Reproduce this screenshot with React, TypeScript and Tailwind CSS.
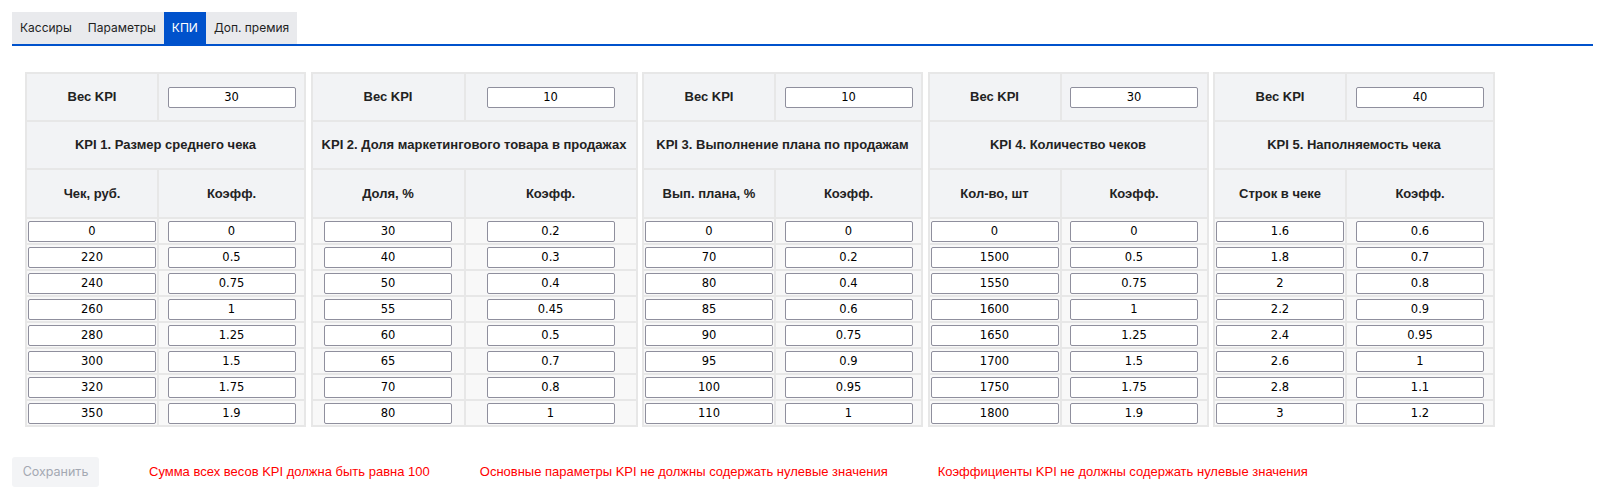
import React from "react";

type Kpi = {
  weight: string;
  title: string;
  colA: string;
  colB: string;
  cols: string;
  rows: [string, string][];
};

const kpis: Kpi[] = [
  {
    weight: "30",
    title: "KPI 1. Размер среднего чека",
    colA: "Чек, руб.",
    colB: "Коэфф.",
    cols: "grid-cols-[130px_145px]",
    rows: [
      ["0", "0"],
      ["220", "0.5"],
      ["240", "0.75"],
      ["260", "1"],
      ["280", "1.25"],
      ["300", "1.5"],
      ["320", "1.75"],
      ["350", "1.9"],
    ],
  },
  {
    weight: "10",
    title: "KPI 2. Доля маркетингового товара в продажах",
    colA: "Доля, %",
    colB: "Коэфф.",
    cols: "grid-cols-[151px_170px]",
    rows: [
      ["30", "0.2"],
      ["40", "0.3"],
      ["50", "0.4"],
      ["55", "0.45"],
      ["60", "0.5"],
      ["65", "0.7"],
      ["70", "0.8"],
      ["80", "1"],
    ],
  },
  {
    weight: "10",
    title: "KPI 3. Выполнение плана по продажам",
    colA: "Вып. плана, %",
    colB: "Коэфф.",
    cols: "grid-cols-[130px_145px]",
    rows: [
      ["0", "0"],
      ["70", "0.2"],
      ["80", "0.4"],
      ["85", "0.6"],
      ["90", "0.75"],
      ["95", "0.9"],
      ["100", "0.95"],
      ["110", "1"],
    ],
  },
  {
    weight: "30",
    title: "KPI 4. Количество чеков",
    colA: "Кол-во, шт",
    colB: "Коэфф.",
    cols: "grid-cols-[130px_145px]",
    rows: [
      ["0", "0"],
      ["1500", "0.5"],
      ["1550", "0.75"],
      ["1600", "1"],
      ["1650", "1.25"],
      ["1700", "1.5"],
      ["1750", "1.75"],
      ["1800", "1.9"],
    ],
  },
  {
    weight: "40",
    title: "KPI 5. Наполняемость чека",
    colA: "Строк в чеке",
    colB: "Коэфф.",
    cols: "grid-cols-[130px_146px]",
    rows: [
      ["1.6", "0.6"],
      ["1.8", "0.7"],
      ["2", "0.8"],
      ["2.2", "0.9"],
      ["2.4", "0.95"],
      ["2.6", "1"],
      ["2.8", "1.1"],
      ["3", "1.2"],
    ],
  },
];

const tabs = ["Кассиры", "Параметры", "КПИ", "Доп. премия"];

const Field = ({ value }: { value: string }) => (
  <input
    readOnly
    value={value}
    className="w-[128px] h-[21px] rounded-[2px] border border-[#8f8f9d] bg-white text-center text-[11.5px] font-normal text-black font-['DejaVu_Sans',sans-serif] outline-none"
  />
);

const Head = ({ children, tall }: { children: React.ReactNode; tall?: boolean }) => (
  <div
    className={`flex items-center justify-center bg-[#f2f3f5] text-[13px] font-bold text-[#222] ${
      tall ? "h-[47px]" : "h-[46px]"
    }`}
  >
    {children}
  </div>
);

const KpiTable = ({ kpi }: { kpi: Kpi }) => (
  <div className={`grid ${kpi.cols} gap-[2px] bg-[#e7e7e7] p-[2px]`}>
    <Head>Вес KPI</Head>
    <Head>
      <Field value={kpi.weight} />
    </Head>
    <div className="col-span-2">
      <Head>{kpi.title}</Head>
    </div>
    <Head tall>{kpi.colA}</Head>
    <Head tall>{kpi.colB}</Head>
    {kpi.rows.map(([a, b], i) => (
      <React.Fragment key={i}>
        <div className="flex h-6 items-center justify-center bg-[#f8f8f8]">
          <Field value={a} />
        </div>
        <div className="flex h-6 items-center justify-center bg-[#f8f8f8]">
          <Field value={b} />
        </div>
      </React.Fragment>
    ))}
  </div>
);

export default function App() {
  return (
    <div className="min-h-screen bg-white pt-3 font-['Liberation_Sans',Arial,sans-serif]">
      {/* Tabs */}
      <div className="ml-3 mr-[6px] flex border-b-2 border-[#0052cc]">
        {tabs.map((t) => (
          <div
            key={t}
            className={`flex h-8 items-center px-2 text-[12px] font-['Inter',sans-serif] ${
              t === "КПИ" ? "bg-[#0052cc] text-white" : "bg-[#e9eaed] text-[#1f1f1f]"
            }`}
          >
            {t}
          </div>
        ))}
      </div>

      {/* KPI tables */}
      <div className="ml-[25px] mt-[26px] flex items-start gap-[4.5px]">
        {kpis.map((k) => (
          <KpiTable key={k.title} kpi={k} />
        ))}
      </div>

      {/* Footer */}
      <div className="ml-3 mt-[30px] flex items-center gap-[50px]">
        <button
          disabled
          className="h-[30px] w-[87px] rounded-[3px] bg-[#f3f4f6] text-[12.5px] text-[#a3a8b2] font-['Inter',sans-serif]"
        >
          Сохранить
        </button>
        <span className="text-[13px] text-[#ff0000]">Сумма всех весов KPI должна быть равна 100</span>
        <span className="text-[13px] text-[#ff0000]">
          Основные параметры KPI не должны содержать нулевые значения
        </span>
        <span className="text-[13px] text-[#ff0000]">
          Коэффициенты KPI не должны содержать нулевые значения
        </span>
      </div>
    </div>
  );
}
